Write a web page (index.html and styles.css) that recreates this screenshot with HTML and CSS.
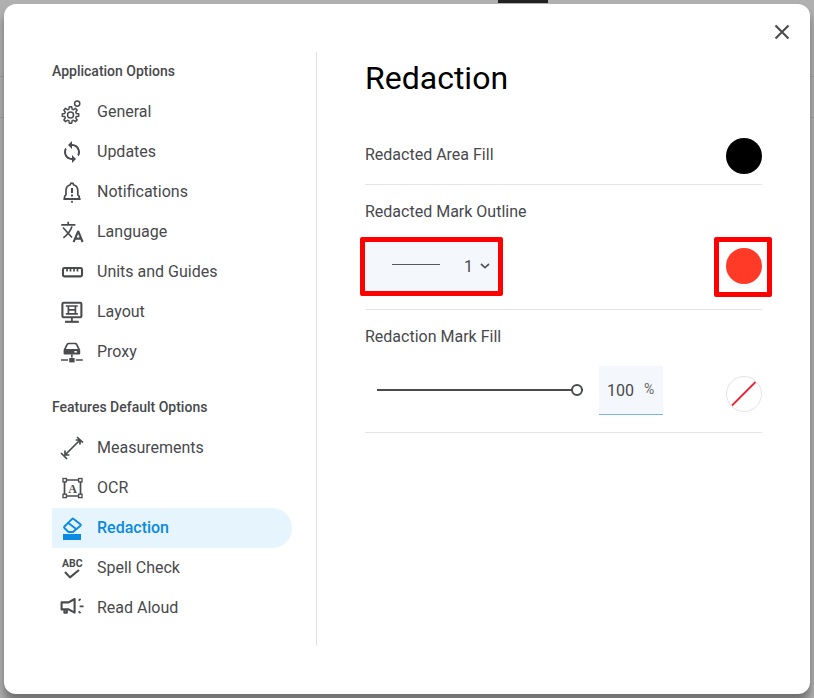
FILE: index.html
```html
<!DOCTYPE html>
<html lang="en">
<head>
<meta charset="utf-8">
<title>Settings</title>
<link rel="stylesheet" href="styles.css">
</head>
<body>
<div class="tab"></div>
<div class="dialog">
  <button class="close" aria-label="Close">
    <svg width="24" height="24" viewBox="0 0 24 24"><path class="st3" d="M5.5 5.5l13 13M18.5 5.5l-13 13"/></svg>
  </button>
  <aside class="sidebar">
    <section class="group">
      <h2 class="group-title">Application Options</h2>
      <ul class="nav">
        <li class="nav-item">
          <svg class="icon" viewBox="0 0 24 24">
            <defs><path id="tooth" d="M-2.3-5.3L-1.6-5.9L-1.2-8.2H1.2L1.6-5.9L2.3-5.3"/></defs>
            <g class="st" transform="translate(11.5 15)">
              <use href="#tooth"/><use href="#tooth" transform="rotate(45)"/><use href="#tooth" transform="rotate(90)"/><use href="#tooth" transform="rotate(135)"/><use href="#tooth" transform="rotate(180)"/><use href="#tooth" transform="rotate(225)"/><use href="#tooth" transform="rotate(270)"/><use href="#tooth" transform="rotate(315)"/>
              <circle r="3"/>
            </g>
            <circle class="st" cx="18.2" cy="3.6" r="2.6"/>
          </svg>
          <span>General</span>
        </li>
        <li class="nav-item">
          <svg class="icon" viewBox="0 0 24 24">
            <path class="fl" transform="translate(1 0)" d="M12 4V1L8 5l4 4V6c3.31 0 6 2.69 6 6 0 1.01-.25 1.97-.7 2.8l1.46 1.46C19.54 15.03 20 13.57 20 12c0-4.42-3.58-8-8-8zm0 14c-3.31 0-6-2.69-6-6 0-1.01.25-1.97.7-2.8L5.24 7.74C4.46 8.97 4 10.43 4 12c0 4.42 3.58 8 8 8v3l4-4-4-4v3z"/>
          </svg>
          <span>Updates</span>
        </li>
        <li class="nav-item">
          <svg class="icon" viewBox="0 0 24 24">
            <path class="st2" d="M5.6 18v-1.6l1.4-1.6V10.5a6 6 0 0 1 4.3-5.7a1.6 1.6 0 0 1 3.2 0a6 6 0 0 1 4.3 5.7v4.3l1.4 1.6V18"/>
            <path class="st3" d="M13 8v5M13 14.6v1.8M4.4 19h17.2"/>
            <circle class="fl" cx="13" cy="21.8" r="1.1"/>
          </svg>
          <span>Notifications</span>
        </li>
        <li class="nav-item">
          <svg class="icon" viewBox="0 0 24 24">
            <path class="st2" d="M2.2 4.8h14.2M9.2 1.8v3M4 7.5l9 10M13 6.5c-1.6 4.4-4 8-8.6 11.2"/>
            <path class="st3" d="M14.6 22L19 11.6h.4L23.6 22M16 18.6h6.2"/>
          </svg>
          <span>Language</span>
        </li>
        <li class="nav-item">
          <svg class="icon" viewBox="0 0 24 24">
            <rect class="st3" x="4" y="8" width="19" height="8.4" rx="1.4"/>
            <path class="st2" d="M8 8v3.6M11.5 8v3.6M15 8v3.6M18.5 8v3.6"/>
          </svg>
          <span>Units and Guides</span>
        </li>
        <li class="nav-item">
          <svg class="icon" viewBox="0 0 24 24">
            <rect class="st3" x="3.4" y="2.8" width="19" height="14.4" rx="1.2"/>
            <path class="st2" d="M6.8 6h12M6.8 13.8h12M9.4 6v7.8M16.4 6v7.8M9.4 9.9h7M12.9 17.2v4.4"/>
            <path class="st3" d="M6 21.8h13.8"/>
          </svg>
          <span>Layout</span>
        </li>
        <li class="nav-item">
          <svg class="icon" viewBox="0 0 24 24">
            <path class="st2" d="M5.6 9.6l2.6-5.2a1.6 1.6 0 0 1 1.4-.9h6.6a1.6 1.6 0 0 1 1.4.9l2.6 5.2"/>
            <rect class="fl" x="4.6" y="9" width="16.6" height="5.6" rx="1"/>
            <rect class="hole" x="15.4" y="11" width="2.4" height="1.6"/>
            <path class="st2" d="M12.9 14.6v3M2 20h7M16.8 20h7"/>
            <rect class="fl" x="10.2" y="18" width="5.4" height="4.4"/>
          </svg>
          <span>Proxy</span>
        </li>
      </ul>
    </section>
    <section class="group group-next">
      <h2 class="group-title">Features Default Options</h2>
      <ul class="nav">
        <li class="nav-item">
          <svg class="icon" viewBox="0 0 24 24">
            <path class="st2" d="M2 17l6 6M18 1l6 5.6M6 19L21 4M6 14.6V19H10.4M16.6 4H21V8.4"/>
          </svg>
          <span>Measurements</span>
        </li>
        <li class="nav-item">
          <svg class="icon" viewBox="0 0 24 24">
            <rect class="st2" x="5.5" y="4" width="16" height="16"/>
            <g class="corner">
              <rect x="4" y="2.5" width="3.4" height="3.4"/><rect x="19.6" y="2.5" width="3.4" height="3.4"/><rect x="4" y="18.2" width="3.4" height="3.4"/><rect x="19.6" y="18.2" width="3.4" height="3.4"/>
            </g>
            <text class="ocr-a" x="13.5" y="16.8">A</text>
          </svg>
          <span>OCR</span>
        </li>
        <li class="nav-item active">
          <svg class="icon" viewBox="0 0 24 24">
            <path class="st-blue" d="M13.2 2.9a1 1 0 0 1 1.4 0L21.4 8.2a1 1 0 0 1 0 1.5L14 16H9.5L5.4 12a1 1 0 0 1 0-1.5ZM9 6.8L17.2 13"/>
            <rect class="fl-blue" x="4" y="18" width="18" height="6"/>
          </svg>
          <span>Redaction</span>
        </li>
        <li class="nav-item">
          <svg class="icon" viewBox="0 0 24 24">
            <text class="abc" x="3" y="11">ABC</text>
            <path class="st3" d="M6 16l5 5.4L20 14"/>
          </svg>
          <span>Spell Check</span>
        </li>
        <li class="nav-item">
          <svg class="icon" viewBox="0 0 24 24">
            <path class="st3" d="M2.6 6.4h7l6-3.4v13.6l-6-3.2H2.6zM5.4 13v3.8h2.4V13"/>
            <path class="st2" d="M19.6 4.6l2-1.6M20.6 10.4h4M19.6 15.4l2 1.8"/>
          </svg>
          <span>Read Aloud</span>
        </li>
      </ul>
    </section>
  </aside>
  <main class="content">
    <h1 class="title">Redaction</h1>
    <div class="row row-first">
      <span class="label label-first">Redacted Area Fill</span>
      <span class="swatch swatch-black"></span>
    </div>
    <div class="row">
      <div class="label">Redacted Mark Outline</div>
      <div class="controls">
        <div class="select marked">
          <span class="line-sample"></span>
          <span class="select-value">1</span>
          <svg class="chevron" width="10" height="6" viewBox="0 0 10 6"><path d="M1 1l4 3.6L9 1"/></svg>
        </div>
        <div class="swatch-box marked"><span class="swatch swatch-red"></span></div>
      </div>
    </div>
    <div class="row">
      <div class="label">Redaction Mark Fill</div>
      <div class="controls controls-fill">
        <div class="slider"><span class="track"></span><span class="knob"></span></div>
        <div class="percent"><span class="percent-value">100</span><span class="percent-unit">%</span></div>
        <svg class="swatch-none" width="36" height="36" viewBox="0 0 36 36">
          <circle cx="18" cy="18" r="17.5"/>
          <path d="M6 29.5L29.5 6"/>
        </svg>
      </div>
    </div>
  </main>
</div>
</body>
</html>
```
FILE: styles.css
```css
* { box-sizing: border-box; }
html, body { margin: 0; height: 698px; overflow: hidden; }
body {
  padding: 4px;
  font-family: Roboto, "Liberation Sans", sans-serif;
  color: #48494c;
  background-color: #b0b0b0;
  background-image:
    linear-gradient(#a0a0a0, #a0a0a0), linear-gradient(#a0a0a0, #a0a0a0);
  background-size: 100% 1px, 100% 1px;
  background-position: 0 76px, 0 117px;
  background-repeat: no-repeat;
}
.tab { position: absolute; left: 498px; top: 0; width: 50px; height: 3px; background: #222; }
.dialog {
  position: relative;
  display: flex;
  width: 806px;
  height: 690px;
  background: #fff;
  border-radius: 12px;
  box-shadow: 0 8px 8px rgba(0, 0, 0, .36);
}
.close {
  position: absolute;
  top: 16px;
  right: 16px;
  width: 24px;
  height: 24px;
  padding: 0;
  border: 0;
  background: none;
}
.close svg { display: block; }
.sidebar {
  flex: 0 0 313px;
  height: 594px;
  margin-top: 48px;
  padding: 9px 24px 0 48px;
  border-right: 1px solid #e2e2e2;
}
.group-next { margin-top: 25px; }
.group-title {
  margin: 0 0 11px;
  font-size: 14px;
  font-weight: 500;
  line-height: 20px;
  color: #48494c;
}
.nav { margin: 0; padding: 0; list-style: none; }
.nav-item {
  display: flex;
  align-items: center;
  gap: 14px;
  height: 40px;
  padding-left: 7px;
  font-size: 16px;
}
.nav-item span { margin-bottom: 2px; }
.nav-item.active {
  color: #0a8ae0;
  font-weight: 500;
  background: #e6f4fe;
  border-radius: 0 20px 20px 0;
}
.icon { flex: none; width: 24px; height: 24px; overflow: visible; }
.st, .st2, .st3, .st-blue { fill: none; stroke-linejoin: round; }
.st { stroke: #4a4b4e; stroke-width: 1.5; }
.st2 { stroke: #4a4b4e; stroke-width: 1.7; }
.st3 { stroke: #4a4b4e; stroke-width: 2.1; }
.st-blue { stroke: #0a8ae0; stroke-width: 1.9; }
.fl { fill: #4a4b4e; }
.fl-blue { fill: #0a8ae0; }
.hole { fill: #fff; }
.corner rect { fill: #fff; stroke: #4a4b4e; stroke-width: 1.3; }
.ocr-a { font: bold 12px "Liberation Serif", serif; fill: #4a4b4e; text-anchor: middle; }
.abc { font: bold 10.5px Roboto, sans-serif; fill: #4a4b4e; }
.content { flex: 1; height: 594px; margin-top: 48px; padding: 6px 48px 0; }
.title {
  margin: 0 0 40px;
  font-size: 32px;
  font-weight: 400;
  line-height: 40px;
  color: #000;
}
.row { padding: 17px 0; border-bottom: 1px solid #e4e4e4; }
.row-first {
  display: flex;
  align-items: center;
  justify-content: space-between;
  padding: 0 0 10px;
}
.label { font-size: 16px; line-height: 20px; }
.label-first { margin-top: -2px; }
.controls { display: flex; justify-content: space-between; margin-top: 20px; }
.marked { position: relative; }
.marked::after {
  content: "";
  position: absolute;
  inset: -5px;
  border: 5px solid #f00;
  border-radius: 2px;
}
.swatch { display: block; width: 36px; height: 36px; border-radius: 50%; }
.swatch-black { background: #000; }
.swatch-red { background: #ff3b28; }
.swatch-box {
  height: 50px;
  margin-right: -5px;
  padding: 6px 5px 0 7px;
}
.select {
  display: flex;
  align-items: center;
  width: 133px;
  height: 49px;
  padding-left: 27px;
  background: #f4f8fc;
}
.line-sample { width: 48px; height: 1px; margin-top: -4px; background: #55575a; }
.select-value { margin-left: 24px; font-size: 16px; }
.chevron { margin-left: 7px; margin-top: -2px; }
.chevron path { fill: none; stroke: #55575a; stroke-width: 1.7; }
.controls-fill { align-items: center; justify-content: flex-start; margin-top: 19px; }
.slider { position: relative; display: flex; align-items: center; width: 206px; margin: -1px 0 0 12px; }
.track { display: block; width: 100%; height: 2px; background: #4a4b4e; }
.knob {
  position: absolute;
  right: 0;
  top: -5px;
  width: 12px;
  height: 12px;
  border: 2px solid #4a4b4e;
  border-radius: 50%;
  background: #fff;
}
.percent {
  display: flex;
  align-items: center;
  width: 64px;
  height: 49px;
  margin-left: 16px;
  padding-left: 8px;
  background: #f4f8fc;
  border-bottom: 1px solid #7ab8ea;
}
.percent-value { font-size: 16px; }
.percent-unit { margin-left: 10px; margin-top: -2px; font-size: 14px; color: #666; }
.swatch-none { flex: none; margin-left: auto; margin-top: 6px; }
.swatch-none circle { fill: #fff; stroke: #e3e3e3; }
.swatch-none path { stroke: #ee2233; stroke-width: 1.8; fill: none; }
```
